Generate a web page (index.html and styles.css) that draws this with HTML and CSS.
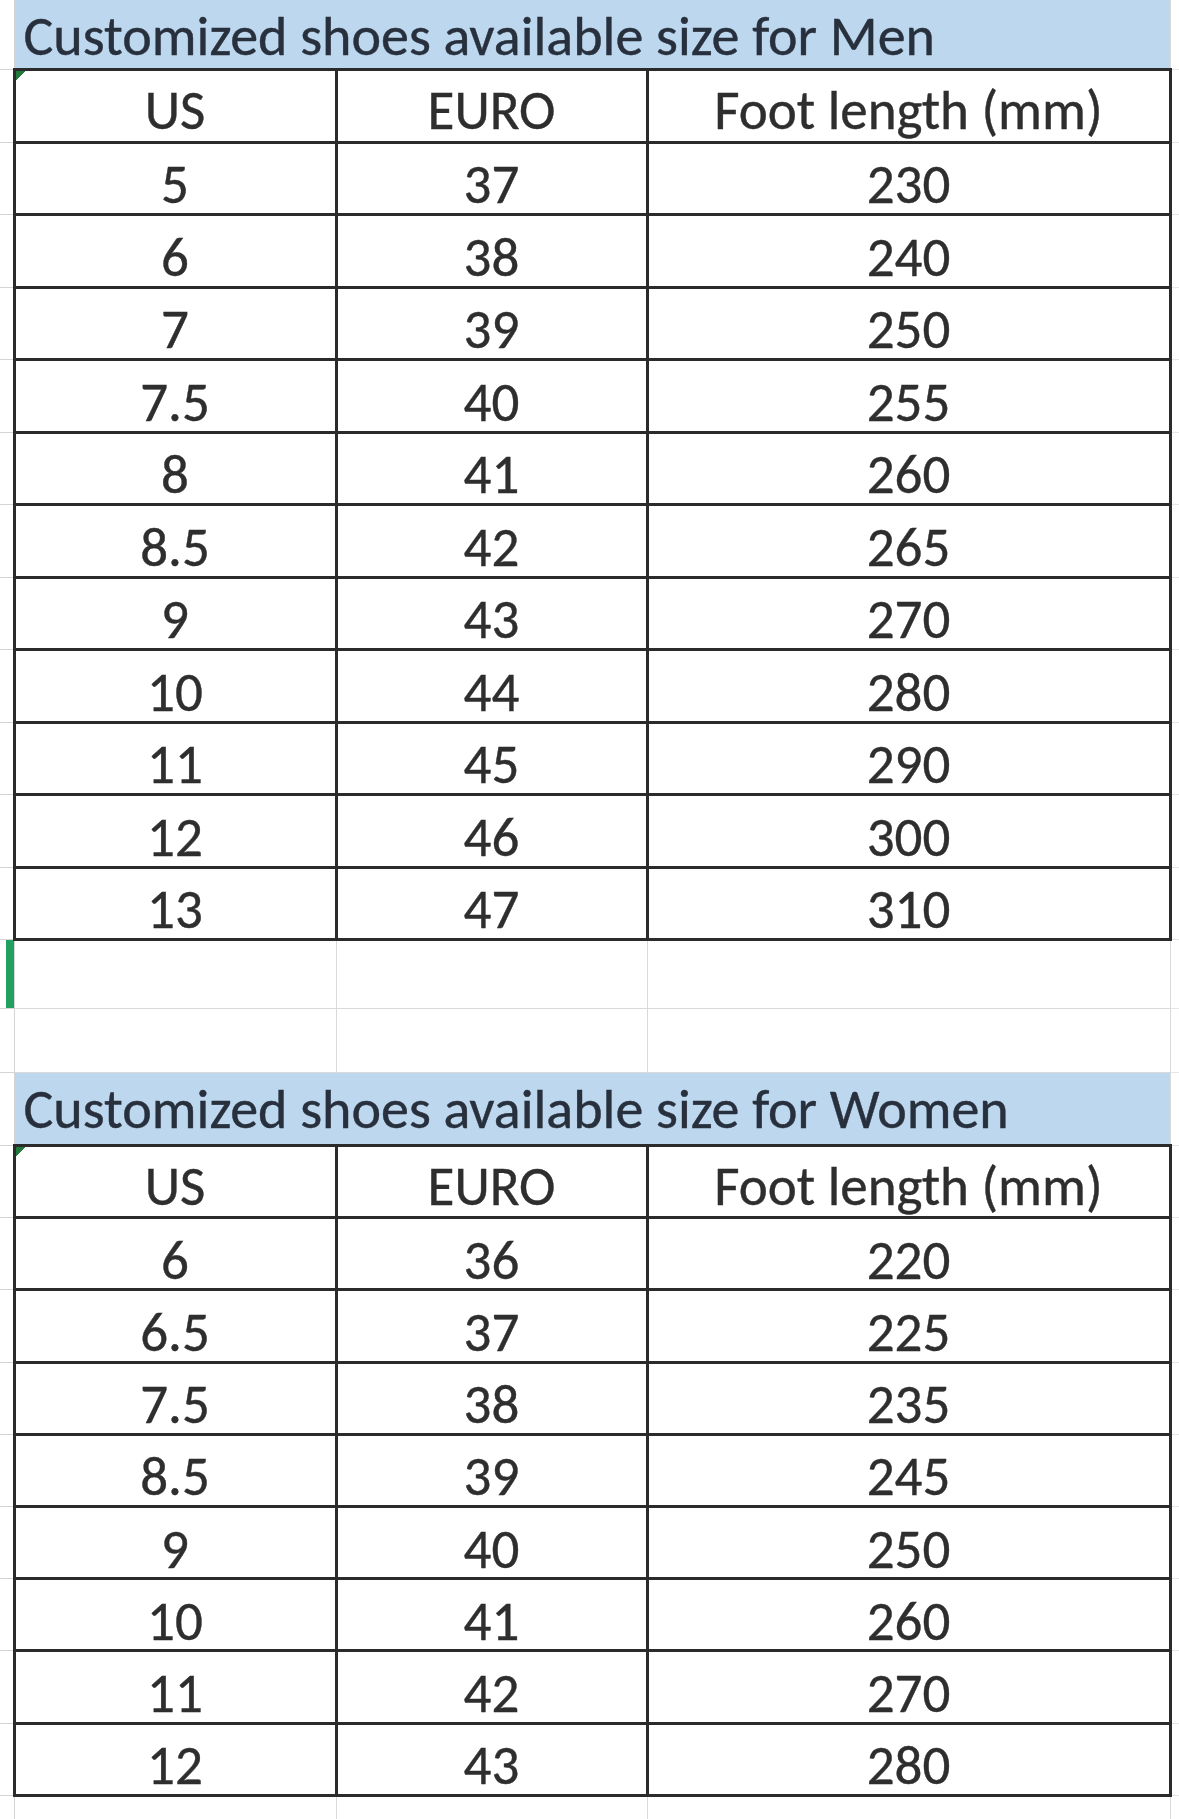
FILE: index.html
```html
<!DOCTYPE html>
<html lang="en">
<head>
<meta charset="utf-8">
<title>Customized shoes size chart</title>
<link rel="stylesheet" href="styles.css">
</head>
<body>
<table class="sheet">
  <colgroup>
    <col class="c-gutter">
    <col class="c-us">
    <col class="c-euro">
    <col class="c-foot">
    <col class="c-rest">
  </colgroup>
  <tbody>
    <tr class="r-title-first"><td class="gutter"></td><td class="title title-first" colspan="3">Customized shoes available size for Men</td><td class="rest"></td></tr>
    <tr class="r-data"><td class="gutter"></td><td class="cell head flag">US</td><td class="cell head">EURO</td><td class="cell head">Foot length (mm)</td><td class="rest"></td></tr>
    <tr class="r-data"><td class="gutter"></td><td class="cell">5</td><td class="cell">37</td><td class="cell">230</td><td class="rest"></td></tr>
    <tr class="r-data"><td class="gutter"></td><td class="cell">6</td><td class="cell">38</td><td class="cell">240</td><td class="rest"></td></tr>
    <tr class="r-data"><td class="gutter"></td><td class="cell">7</td><td class="cell">39</td><td class="cell">250</td><td class="rest"></td></tr>
    <tr class="r-data"><td class="gutter"></td><td class="cell">7.5</td><td class="cell">40</td><td class="cell">255</td><td class="rest"></td></tr>
    <tr class="r-data"><td class="gutter"></td><td class="cell">8</td><td class="cell">41</td><td class="cell">260</td><td class="rest"></td></tr>
    <tr class="r-data"><td class="gutter"></td><td class="cell">8.5</td><td class="cell">42</td><td class="cell">265</td><td class="rest"></td></tr>
    <tr class="r-data"><td class="gutter"></td><td class="cell">9</td><td class="cell">43</td><td class="cell">270</td><td class="rest"></td></tr>
    <tr class="r-data"><td class="gutter"></td><td class="cell">10</td><td class="cell">44</td><td class="cell">280</td><td class="rest"></td></tr>
    <tr class="r-data"><td class="gutter"></td><td class="cell">11</td><td class="cell">45</td><td class="cell">290</td><td class="rest"></td></tr>
    <tr class="r-data"><td class="gutter"></td><td class="cell">12</td><td class="cell">46</td><td class="cell">300</td><td class="rest"></td></tr>
    <tr class="r-data"><td class="gutter"></td><td class="cell">13</td><td class="cell">47</td><td class="cell">310</td><td class="rest"></td></tr>
    <tr class="r-empty1"><td class="gutter sel"></td><td class="blank"></td><td class="blank"></td><td class="blank"></td><td class="rest"></td></tr>
    <tr class="r-empty2"><td class="gutter"></td><td class="blank"></td><td class="blank"></td><td class="blank"></td><td class="rest"></td></tr>
    <tr class="r-title"><td class="gutter"></td><td class="title" colspan="3">Customized shoes available size for Women</td><td class="rest"></td></tr>
    <tr class="r-data2"><td class="gutter"></td><td class="cell head flag">US</td><td class="cell head">EURO</td><td class="cell head">Foot length (mm)</td><td class="rest"></td></tr>
    <tr class="r-data2"><td class="gutter"></td><td class="cell">6</td><td class="cell">36</td><td class="cell">220</td><td class="rest"></td></tr>
    <tr class="r-data2"><td class="gutter"></td><td class="cell">6.5</td><td class="cell">37</td><td class="cell">225</td><td class="rest"></td></tr>
    <tr class="r-data2"><td class="gutter"></td><td class="cell">7.5</td><td class="cell">38</td><td class="cell">235</td><td class="rest"></td></tr>
    <tr class="r-data2"><td class="gutter"></td><td class="cell">8.5</td><td class="cell">39</td><td class="cell">245</td><td class="rest"></td></tr>
    <tr class="r-data2"><td class="gutter"></td><td class="cell">9</td><td class="cell">40</td><td class="cell">250</td><td class="rest"></td></tr>
    <tr class="r-data2"><td class="gutter"></td><td class="cell">10</td><td class="cell">41</td><td class="cell">260</td><td class="rest"></td></tr>
    <tr class="r-data2"><td class="gutter"></td><td class="cell">11</td><td class="cell">42</td><td class="cell">270</td><td class="rest"></td></tr>
    <tr class="r-data2"><td class="gutter"></td><td class="cell">12</td><td class="cell">43</td><td class="cell">280</td><td class="rest"></td></tr>
    <tr class="r-empty3"><td class="gutter"></td><td class="blank"></td><td class="blank"></td><td class="blank"></td><td class="rest"></td></tr>
  </tbody>
</table>
</body>
</html>
```

FILE: styles.css
```css
html, body {
  margin: 0;
  padding: 0;
  background: #ffffff;
}

body {
  width: 1179px;
  height: 1819px;
  overflow: hidden;
  font-family: "Carlito", "Lato", "Liberation Sans", sans-serif;
  color: #2e2e2e;
}

.sheet {
  border-collapse: collapse;
  table-layout: fixed;
  width: 1179px;
}

.c-gutter { width: 14px; }
.c-us { width: 322px; }
.c-euro { width: 311px; }
.c-foot { width: 523px; }
.c-rest { width: 9px; }

td {
  padding: 0;
  font-size: 55px;
  line-height: 1;
  -webkit-text-stroke: 0.4px currentColor;
}

.gutter {
  border-right: 1px solid #d4d4d4;
  border-bottom: 1px solid #d4d4d4;
}

.gutter.sel {
  box-shadow: inset -8px 0 0 #22a060;
}

.rest {
  border-left: 1px solid #d9d9d9;
  border-bottom: 1px solid #e6e6e6;
}

.r-title-first { height: 69.5px; }
.r-title { height: 73px; }
.r-data { height: 72.5px; }
.r-data2 { height: 72.2px; }
.r-empty1 { height: 69px; }
.r-empty2 { height: 64px; }
.r-empty3 { height: 40px; }

.title {
  background: #bdd7ee;
  color: #27303c;
  font-size: 56px;
  text-align: left;
  vertical-align: bottom;
  padding: 0 0 7px 9px;
  white-space: nowrap;
}

.title-first {
  padding-bottom: 4px;
}

.cell {
  border: 3px solid #2b2b2b;
  text-align: center;
  vertical-align: middle;
  padding-top: 13px;
  white-space: nowrap;
}

.cell.head {
  padding-top: 10px;
}

.flag {
  background: linear-gradient(135deg, #217a3c 0, #217a3c 7px, transparent 7px) no-repeat;
}

.blank {
  border: 1px solid #d9d9d9;
}
```
